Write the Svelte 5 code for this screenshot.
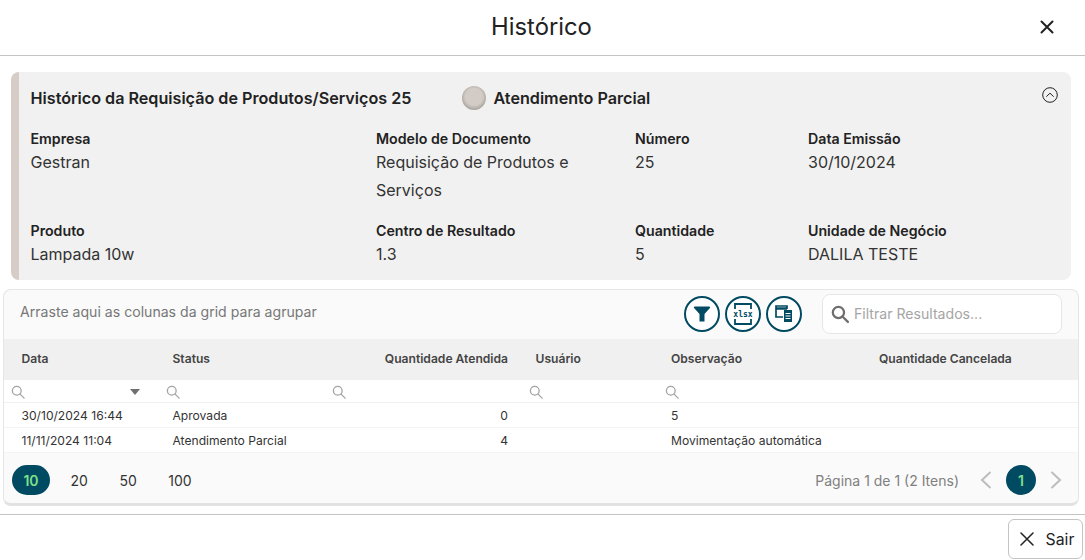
<script lang="ts">
    const info = [
        { label: "Empresa", value: "Gestran" },
        { label: "Modelo de Documento", value: "Requisição de Produtos e Serviços" },
        { label: "Número", value: "25" },
        { label: "Data Emissão", value: "30/10/2024" },
        { label: "Produto", value: "Lampada 10w" },
        { label: "Centro de Resultado", value: "1.3" },
        { label: "Quantidade", value: "5" },
        { label: "Unidade de Negócio", value: "DALILA TESTE" }
    ];

    const columns = ["Data", "Status", "Quantidade Atendida", "Usuário", "Observação", "Quantidade Cancelada"];

    const rows = [
        ["30/10/2024 16:44", "Aprovada", "0", "", "5", ""],
        ["11/11/2024 11:04", "Atendimento Parcial", "4", "", "Movimentação automática", ""]
    ];

    const sizes = ["10", "20", "50", "100"];
</script>

{#snippet lens(size, color, weight)}
    <svg width={size} height={size} viewBox="0 0 16 16" fill="none" stroke={color} stroke-width={weight} stroke-linecap="round">
        <circle cx="6.6" cy="6.6" r="5" />
        <path d="M10.4 10.4 15 15" />
    </svg>
{/snippet}

<div class="page">
    <header class="top">
        <h1>Histórico</h1>
        <button class="close" aria-label="Fechar">
            <svg width="14" height="14" viewBox="0 0 14 14" stroke="#222" stroke-width="2" stroke-linecap="round">
                <path d="M1.5 1.5 12.5 12.5M12.5 1.5 1.5 12.5" />
            </svg>
        </button>
    </header>

    <main class="body">
        <section class="card">
            <div class="card-head">
                <h2>Histórico da Requisição de Produtos/Serviços 25</h2>
                <span class="dot"></span>
                <strong>Atendimento Parcial</strong>
                <svg class="collapse" width="16" height="16" viewBox="0 0 16 16" fill="none" stroke="#222" stroke-width="1">
                    <circle cx="8" cy="8" r="7.3" />
                    <path d="M4.6 9.4 8 6.2l3.4 3.2" stroke-linecap="round" stroke-linejoin="round" />
                </svg>
            </div>
            <div class="info">
                {#each info as item}
                    <div class="field">
                        <span class="label">{item.label}</span>
                        <span class="value">{item.value}</span>
                    </div>
                {/each}
            </div>
        </section>

        <section class="grid-panel">
            <div class="toolbar">
                <span class="hint">Arraste aqui as colunas da grid para agrupar</span>
                <div class="tools">
                    <button class="round" aria-label="Filtro">
                        <svg width="18" height="18" viewBox="0 0 18 18" fill="#004a62">
                            <path d="M1.8 1.5h14.4a.9.9 0 0 1 .7 1.5L11.5 9v7.5h-5V9L1.1 3a.9.9 0 0 1 .7-1.5z" />
                        </svg>
                    </button>
                    <button class="round" aria-label="Exportar xlsx">
                        <svg width="24" height="26" viewBox="0 0 24 26" fill="none" stroke="#004a62" stroke-width="1.8">
                            <path d="M4 8V3h16v5M4 18v5h16v-5" />
                            <text x="12" y="15.8" text-anchor="middle" class="xlsx">xlsx</text>
                        </svg>
                    </button>
                    <button class="round" aria-label="Colunas">
                        <svg width="20" height="20" viewBox="0 0 20 20" fill="none" stroke="#004a62" stroke-width="1.7">
                            <path d="M13 5V2H2v11h7" />
                            <path d="M2 4.5h11" stroke-width="2.4" />
                            <rect x="10" y="6" width="8" height="12" fill="#004a62" stroke="none" />
                            <path d="M11.5 9.5h5M11.5 12h5M11.5 14.5h5" stroke="#fafafa" stroke-width="1" />
                        </svg>
                    </button>
                </div>
                <label class="search">
                    {@render lens(18, "#6f6f6f", 2)}
                    <input placeholder="Filtrar Resultados..." />
                </label>
            </div>

            <div class="row head">
                {#each columns as col, i}
                    <div class="cell" class:num={i === 2}>{col}</div>
                {/each}
            </div>

            <div class="row filters">
                {#each columns.slice(0, 5) as col, i}
                    <div class="fcell">
                        {@render lens(14, "#a3a3a3", 1.5)}
                        {#if i === 0}<span class="caret"></span>{/if}
                    </div>
                {/each}
            </div>

            {#each rows as row}
                <div class="row data">
                    {#each row as text, i}
                        <div class="cell" class:num={i === 2}>{text}</div>
                    {/each}
                </div>
            {/each}

            <div class="pager">
                <div class="sizes">
                    {#each sizes as size, i}
                        <span class="size" class:active={i === 0}>{size}</span>
                    {/each}
                </div>
                <div class="pages">
                    <span class="count">Página 1 de 1 (2 Itens)</span>
                    <svg width="14" height="20" viewBox="0 0 14 20" fill="none" stroke="#bdbdbd" stroke-width="2">
                        <path d="M11.5 2 3 10l8.5 8" />
                    </svg>
                    <span class="page-no">1</span>
                    <svg width="14" height="20" viewBox="0 0 14 20" fill="none" stroke="#bdbdbd" stroke-width="2">
                        <path d="M2.5 2 11 10l-8.5 8" />
                    </svg>
                </div>
            </div>
        </section>
    </main>

    <footer class="bottom">
        <button class="exit">
            <svg width="14" height="14" viewBox="0 0 14 14" stroke="#222" stroke-width="1.5" stroke-linecap="round">
                <path d="M1 1 13 13M13 1 1 13" />
            </svg>
            Sair
        </button>
    </footer>
</div>

<style>
    :global(body) {
        background: #fff;
    }

    .page {
        width: 1085px;
        height: 560px;
        overflow: hidden;
        font-family: Inter, "Liberation Sans", sans-serif;
        color: #222;
    }

    button {
        font-family: inherit;
        background: none;
        border: none;
        padding: 0;
        display: flex;
        align-items: center;
        justify-content: center;
    }

    .top {
        height: 53px;
        padding-bottom: 2px;
        border-bottom: 1px solid #c4c4c4;
        display: flex;
        align-items: center;
        justify-content: center;
        position: relative;
    }

    h1 {
        margin: 0 2px 0 0;
        font-size: 23.8px;
        font-weight: 400;
        color: #222;
    }

    .close {
        position: absolute;
        right: 31px;
        top: 20px;
    }

    .body {
        padding: 16px 6px 10px 3px;
        height: 459px;
        box-sizing: border-box;
        border-bottom: 1px solid #c4c4c4;
    }

    .card {
        margin-left: 8px;
        margin-right: 8px;
        height: 208px;
        box-sizing: border-box;
        background: #f1f1f1;
        border-left: 8px solid #d5cdc6;
        border-radius: 8px;
        padding: 13px 11px 0 11.5px;
    }

    .card-head {
        display: flex;
        align-items: center;
        height: 26px;
        position: relative;
    }

    h2 {
        margin: 0;
        font-size: 16.15px;
        font-weight: 600;
        width: 431.5px;
        white-space: nowrap;
        color: #222;
    }

    .card-head strong {
        font-size: 16.15px;
        font-weight: 600;
        margin-left: 7.5px;
    }

    .dot {
        width: 24px;
        height: 24px;
        border-radius: 50%;
        background: radial-gradient(circle 13px at 50% 45%, #d3ccc6 65%, #a9a49f 100%);
    }

    .collapse {
        position: absolute;
        right: 2px;
        top: 2px;
    }

    .info {
        margin-top: 18px;
        display: grid;
        grid-template-columns: 345.5px 259px 173px 1fr;
        row-gap: 17px;
    }

    .field {
        display: flex;
        flex-direction: column;
        padding-right: 30px;
    }

    .label {
        font-size: 14.2px;
        font-weight: 600;
        line-height: 19px;
    }

    .value {
        font-size: 16px;
        line-height: 28px;
        color: #333;
    }

    .grid-panel {
        margin-top: 9px;
        height: 217px;
        box-sizing: border-box;
        background: #fafafa;
        border: 1px solid #e6e6e6;
        border-bottom: 3px solid #e2e2e2;
        border-radius: 8px;
        overflow: hidden;
    }

    .toolbar {
        height: 49px;
        box-sizing: border-box;
        padding: 0 0 1px 16px;
        display: flex;
        align-items: center;
    }

    .hint {
        font-size: 14.1px;
        color: #777;
        width: 664px;
        margin-bottom: 5px;
    }

    .tools {
        display: flex;
        gap: 5px;
    }

    .round {
        width: 36px;
        height: 36px;
        box-sizing: border-box;
        border: 2px solid #004a62;
        border-radius: 50%;
        background: #fff;
    }

    .xlsx {
        font-family: "DejaVu Sans Mono", monospace;
        font-size: 8px;
        font-weight: 700;
        fill: #004a62;
        stroke: none;
    }

    .search {
        margin-left: 20px;
        width: 240px;
        height: 40px;
        box-sizing: border-box;
        border: 1px solid #e6e6e6;
        border-radius: 8px;
        background: #fff;
        display: flex;
        align-items: center;
        gap: 5px;
        padding-left: 8px;
    }

    .search input {
        border: none;
        outline: none;
        background: none;
        padding: 0;
        margin-bottom: 1px;
        width: 200px;
        font-family: inherit;
        font-size: 14.1px;
    }

    .search input::placeholder {
        color: #a5a5a5;
        opacity: 1;
    }

    .row {
        display: grid;
        grid-template-columns: 155px 166px 197px 135.5px 208px 1fr;
        font-size: 12.1px;
    }

    .cell {
        padding: 0 14px 0 13.5px;
        white-space: nowrap;
    }

    .cell:first-child {
        padding-left: 17.5px;
    }

    .num {
        text-align: right;
    }

    .head {
        height: 41px;
        box-sizing: border-box;
        padding-bottom: 2px;
        align-items: center;
        background: #f0f0f0;
        font-weight: 600;
        color: #444;
    }

    .filters {
        height: 23px;
        box-sizing: border-box;
        background: #fff;
        border-bottom: 1px solid #f0f0f0;
    }

    .fcell {
        display: flex;
        align-items: center;
        justify-content: space-between;
        padding: 2px 19px 0 7px;
    }

    .caret {
        border-left: 5.5px solid transparent;
        border-right: 5.5px solid transparent;
        border-top: 6px solid #6f6f6f;
    }

    .data {
        height: 25px;
        align-items: center;
        background: #fff;
        color: #333;
        border-bottom: 1px solid #f4f4f4;
        box-sizing: border-box;
    }

    .pager {
        height: 50px;
        box-sizing: border-box;
        padding: 4px 15px 0 8px;
        display: flex;
        align-items: center;
        justify-content: space-between;
    }

    .sizes {
        display: flex;
        align-items: center;
        gap: 9.5px;
    }

    .size {
        padding: 0 11px;
        height: 30px;
        border-radius: 15px;
        display: flex;
        align-items: center;
        justify-content: center;
        font-size: 14px;
        color: #333;
    }

    .size.active {
        padding: 0;
        width: 38px;
        background: #004a62;
        color: #7fe08a;
        font-weight: 600;
    }

    .pages {
        display: flex;
        align-items: center;
        gap: 13px;
    }

    .count {
        font-size: 14px;
        color: #808080;
        margin-right: 7px;
    }

    .page-no {
        width: 30px;
        height: 30px;
        border-radius: 50%;
        background: #004a62;
        color: #7fe08a;
        font-size: 14px;
        font-weight: 600;
        display: flex;
        align-items: center;
        justify-content: center;
    }

    .bottom {
        display: flex;
        justify-content: flex-end;
        padding: 4px 2px 0 0;
    }

    .exit {
        width: 75px;
        height: 40px;
        box-sizing: border-box;
        gap: 12px;
        padding-left: 3px;
        border: 1px solid #c4c4c4;
        border-radius: 6px;
        font-size: 15.8px;
        color: #222;
        background: #fff;
    }
</style>
